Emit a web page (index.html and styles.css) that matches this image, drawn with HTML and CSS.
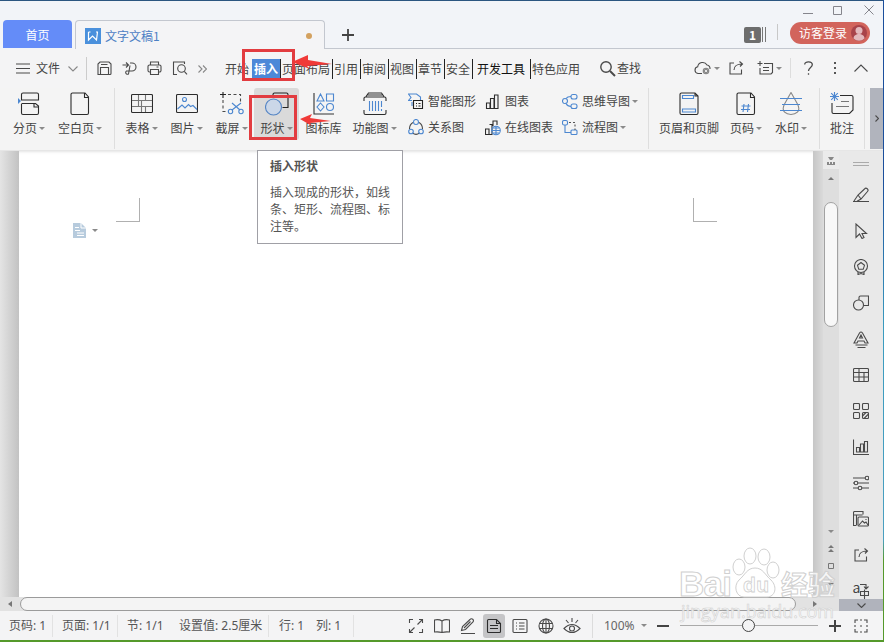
FILE: index.html
```
<!DOCTYPE html>
<html lang="zh-CN">
<head>
    <meta charset="UTF-8">
    <title>文字文稿1</title>
    <link rel="stylesheet" href="styles.css">
</head>
<body>
<div class="window">
    <header class="titlebar">
        <div class="home-tab">首页</div>
        <div class="doc-tab">
            <svg class="doc-logo" width="16" height="16" viewBox="0 0 16 16"><rect width="16" height="16" fill="#4a90dc"/><path d="M3.5 4v8l4-4 4 4 1-8M3.500 4h2M11 4h2" fill="none" stroke="#fff" stroke-width="1.2"/></svg>
            <span class="doc-name">文字文稿1</span>
            <span class="unsaved"></span>
        </div>
        <div class="title-rest">
            <svg class="new-tab" width="12" height="12" viewBox="0 0 12 12"><path d="M6 0v12M0 6h12" stroke="#444" stroke-width="1.8"/></svg>
            <span class="win-count">1</span>
            <span class="win-bars"></span>
            <span class="title-line"></span>
            <div class="title-right">
                <svg class="win-controls" width="80" height="12" viewBox="0 0 80 12"><path d="M3 9.500h10M33.500 2.500h8v8h-8zM64.500 1.500l9 9M73.500 1.500l-9 9" fill="none" stroke="#85858c"/></svg>
                <div class="login"><span>访客登录</span>
                    <svg width="16" height="16" viewBox="0 0 16 16"><circle cx="8" cy="8" r="8" fill="#a8434a"/><circle cx="8" cy="5.500" r="3.500" fill="#e3b9bd"/><path d="M2.500 13.500c0-6 11-6 11 0a8 8 0 0 1-11 0z" fill="#e3b9bd"/></svg>
                </div>
            </div>
        </div>
    </header>

    <nav class="menubar">
        <svg class="icon burger" width="14" height="11" viewBox="0 0 14 11"><path d="M0 1h14M0 5.500h14M0 10h14"/></svg>
        <span class="file">文件</span>
        <svg class="icon light" width="10" height="6" viewBox="0 0 10 6"><path d="M.5.5l4.500 4.500L9.500.5"/></svg>
        <span class="menu-line"></span>
        <div class="quick">
            <svg class="icon" width="15" height="15" viewBox="0 0 15 15"><path d="M1 13.500V3L3 1h9l2 2v9.500a1 1 0 0 1-1 1zM4 3.500h6.500M3.500 13.500v-7h8v7"/></svg>
            <svg class="icon" width="15" height="15" viewBox="0 0 15 15"><path d="M8 2h2a4 4 0 0 1 0 8H4.500a1.700 1.700 0 1 0 2 3L8 4.500M.5 4h6M4 1.500L6.500 4 4 6.500"/></svg>
            <svg class="icon" width="15" height="15" viewBox="0 0 15 15"><path d="M3.500 4V1h8v3M3.500 11h-1a1.500 1.500 0 0 1-1.500-1.500v-4A1.500 1.500 0 0 1 2.500 4h10A1.500 1.500 0 0 1 14 5.500v4a1.500 1.500 0 0 1-1.500 1.500h-1M3.500 8.500h8v5h-8zM9.500 6h2"/></svg>
            <svg class="icon" width="16" height="15" viewBox="0 0 16 15"><path d="M5 13.500H1.500V1h11v2"/><circle cx="9.500" cy="7.500" r="3.800"/><path d="M12.300 10.300l2.700 3"/></svg>
            <svg class="icon light" width="9" height="8" viewBox="0 0 9 8"><path d="M.5.5L4 4 .5 7.500M5 .5L8.500 4 5 7.500"/></svg>
        </div>
        <div class="tabs">
            <span class="tab plain">开始</span>
            <span class="tab active">插入</span>
            <span class="tab wide">页面布局</span>
            <span class="tab">引用</span>
            <span class="tab">审阅</span>
            <span class="tab">视图</span>
            <span class="tab">章节</span>
            <span class="tab">安全</span>
            <span class="tab dev">开发工具</span>
            <span class="tab plain special">特色应用</span>
        </div>
        <svg class="icon search-icon" width="16" height="16" viewBox="0 0 16 16"><circle cx="6" cy="6" r="5.200" stroke-width="1.400"/><path d="M10 10l5 5" stroke-width="2"/></svg>
        <span class="search">查找</span>
        <div class="menu-tools">
            <svg class="icon" width="18" height="14" viewBox="0 0 18 14"><path d="M8 12.500H4a3.400 3.400 0 0 1-.3-6.700A5 5 0 0 1 13 4a3.500 3.500 0 0 1 3 4"/><circle cx="12" cy="10" r="3.300" fill="#888" stroke="none"/><path d="M10.800 8.800l2.400 2.400M13.200 8.800l-2.400 2.400" stroke="#fff" stroke-width=".8"/></svg>
            <i class="caret c1"></i>
            <svg class="icon share" width="15" height="14" viewBox="0 0 15 14"><path d="M5 2H1v11h11.500V8.500M5 9c0-3.500 3-6 8-6M10.500.5L13.500 3 11 5.500"/></svg>
            <svg class="icon note" width="17" height="14" viewBox="0 0 17 14"><path d="M7 2.500h8.500v9L14 13H3V7M3 0v5M.5 2.500h5M6 6.500h6M6 9.500h6"/></svg>
            <i class="caret c1"></i>
            <span class="tool-line"></span>
            <svg class="icon help" width="9" height="14" viewBox="0 0 9 14"><path d="M.7 3.500C.7 0 8.300 0 8.300 3.800 8.300 6.500 4.500 6.500 4.500 10M4.500 12.300v1.400" stroke-width="1.300"/></svg>
            <svg class="dots" width="2" height="12" viewBox="0 0 2 12"><path d="M0 0h2v2H0zM0 5h2v2H0zM0 10h2v2H0z" fill="#555"/></svg>
            <svg class="icon" width="14" height="8" viewBox="0 0 14 8"><path d="M.5 7.500L7 1l6.500 6.500"/></svg>
        </div>
    </nav>

    <section class="ribbon">
        <div class="group first">
            <div class="btn w46">
                <svg class="icon dark" width="24" height="24" viewBox="0 0 24 24"><path d="M4.500 8V2.500a1.500 1.500 0 0 1 1.500-1.500h14a1.500 1.500 0 0 1 1.500 1.500V8h-17zM4.500 12v9a1.500 1.500 0 0 0 1.500 1.500h14a1.500 1.500 0 0 0 1.500-1.500v-7l-3-2.500H4.500M17 11v4h5"/><path d="M1 6v6l3-3z" fill="#4c87d0" stroke="none"/></svg>
                <span>分页<i class="caret"></i></span>
            </div>
            <div class="btn w56">
                <svg class="icon dark" width="20" height="24" viewBox="0 0 20 24"><path d="M1 2.500A1.500 1.500 0 0 1 2.500 1H15l3.500 4v16a1.500 1.500 0 0 1-1.500 1.500H2.500A1.500 1.500 0 0 1 1 21zM14.500 1v4.500H19"/></svg>
                <span>空白页<i class="caret"></i></span>
            </div>
        </div>
        <div class="group main">
            <div class="btn w45">
                <svg class="icon dark" width="22" height="24" viewBox="0 0 22 24"><rect x=".5" y="2.500" width="21" height="18" rx="1"/><path d="M1 8.500h20M1 14.500h20M7.500 3v11M14.500 3v5M14.500 14v6M10.500 9v11" stroke="#777"/></svg>
                <span>表格<i class="caret"></i></span>
            </div>
            <div class="btn w45">
                <svg class="icon dark" width="22" height="24" viewBox="0 0 22 24"><rect x=".5" y="2.500" width="21" height="18" rx="1"/><g class="blue"><circle cx="8.500" cy="7.500" r="2"/><path d="M1.500 17l4.500-4 3 3 3.500-3.500 2 2 2.500-1 4 4"/></g></svg>
                <span>图片<i class="caret"></i></span>
            </div>
            <div class="btn w45">
                <svg class="icon" width="24" height="24" viewBox="0 0 24 24"><path d="M3 0v6M0 2.500h6" stroke="#222"/><path d="M8 2.500h12.500V11M3 8v11.500h6" stroke-dasharray="3 2.500"/><g class="blue"><circle cx="10.500" cy="19.500" r="2.200"/><circle cx="21" cy="19.500" r="2.200"/><path d="M12 18l9-7M20 18l-8-7"/></g></svg>
                <span>截屏<i class="caret"></i></span>
            </div>
            <div class="btn w45 pressed">
                <svg class="icon" width="24" height="24" viewBox="0 0 24 24"><path d="M8 6V2.500A1.500 1.500 0 0 1 9.500 1h12A1.500 1.500 0 0 1 23 2.500v13H17.500" stroke="#222"/><circle cx="8.500" cy="15" r="8" fill="#cbd7e8" stroke="#5585c4"/></svg>
                <span>形状<i class="caret"></i></span>
            </div>
            <div class="btn w49">
                <svg class="icon blue" width="22" height="24" viewBox="0 0 22 24"><path d="M1 1v21h20" stroke="#333"/><path d="M4 9l3.500-7L11 9zM13.500 2h7v7h-7zM7.500 11l3.500 4-3.500 4L4 15z"/><circle cx="17" cy="15" r="3.500"/></svg>
                <span>图标库</span>
            </div>
            <div class="btn w53">
                <svg class="icon dark" width="24" height="24" viewBox="0 0 24 24"><path d="M1 9V6.500A1.500 1.500 0 0 1 2.500 5h19A1.500 1.500 0 0 1 23 6.500V9M1 18v3a1.500 1.500 0 0 0 1.500 1.500h19A1.500 1.500 0 0 0 23 21v-3M3 4.500l2.500-3.500h13l2.500 3.500M4 3h16"/><path class="blue" d="M6.500 9v10M9.500 9v10M12.500 9v10M15.500 9v10M18.500 9v6M18.500 17v2"/></svg>
                <span>功能图<i class="caret"></i></span>
            </div>
            <div class="stack s1">
                <div class="row">
                    <svg class="icon blue" width="16" height="17" viewBox="0 0 16 17"><path d="M4 7.500H.5L3 4.500.5 1h8l4 3v3M4 9v4"/><path d="M5.500 7.500h9v8h-9zM8 10.500h1M10.500 10.500h2M8 13h1M10.500 13h2" stroke="#222"/></svg>
                    <span>智能图形</span>
                </div>
                <div class="row">
                    <svg class="icon" width="16" height="17" viewBox="0 0 16 17"><path d="M5 3.500C2.500 5 1.500 7 1.500 10M11 3.500c2.500 1.500 3.500 4 3.500 6.500M4.500 14c2 1.500 5 1.500 7 0"/><g class="blue"><circle cx="8" cy="3" r="2.500"/><circle cx="3" cy="12.500" r="2.300"/><circle cx="13" cy="12.500" r="2.300"/></g></svg>
                    <span>关系图</span>
                </div>
            </div>
            <div class="stack s2">
                <div class="row">
                    <svg class="icon dark" width="16" height="17" viewBox="0 0 16 17"><path d="M1.500 10h3.500v5.500H1.500zM5.500 5.500H9v10H5.500zM9.500 2H13v13.500H9.500z"/></svg>
                    <span>图表</span>
                </div>
                <div class="row">
                    <svg class="icon dark" width="16" height="17" viewBox="0 0 16 17"><path d="M.5 10H4v5.500H.5zM4.500 5.500H7v10H4.500M8 7V2h4v4"/><g class="blue"><circle cx="11" cy="11.500" r="4.300"/><path d="M7 11.500h8M11 7v9M8 9h6M8 14h6"/></g></svg>
                    <span>在线图表</span>
                </div>
            </div>
            <div class="stack s3">
                <div class="row">
                    <svg class="icon blue" width="16" height="17" viewBox="0 0 16 17"><circle cx="3" cy="8" r="2.500"/><rect x="9" y="1.500" width="6" height="4.500" rx="2"/><rect x="9" y="11" width="6" height="4.500" rx="2"/><path d="M4 5.500C5 4 7 3.500 9 3.500M4 10.500c1 2 3 3 5 3"/></svg>
                    <span>思维导图<i class="caret"></i></span>
                </div>
                <div class="row">
                    <svg class="icon blue" width="16" height="17" viewBox="0 0 16 17"><rect x=".5" y="1.500" width="5" height="4.500" rx="1.500"/><rect x="9" y="11" width="6" height="4.500" rx="1"/><path d="M3 6v7.500h6"/><path d="M7 3.500h6V11" stroke="#555" stroke-dasharray="2 2"/></svg>
                    <span>流程图<i class="caret"></i></span>
                </div>
            </div>
        </div>
        <div class="group pages">
            <div class="btn w74">
                <svg class="icon dark" width="20" height="24" viewBox="0 0 20 24"><path d="M1 2.500A1.500 1.500 0 0 1 2.500 1H16l3 3v17a1.500 1.500 0 0 1-1.500 1.500h-15A1.500 1.500 0 0 1 1 21zM16 1v3h3"/><path class="blue" d="M3.500 3.500h11v3h-11zM3.500 17h13v3h-13z"/></svg>
                <span>页眉和页脚</span>
            </div>
            <div class="btn w40">
                <svg class="icon dark" width="20" height="24" viewBox="0 0 20 24"><path d="M1 2.500A1.500 1.500 0 0 1 2.500 1H15l3.500 4v16a1.500 1.500 0 0 1-1.500 1.500H2.500A1.500 1.500 0 0 1 1 21zM14.500 1v4.500H19"/><path class="blue" d="M8 12l-1 8M12.500 12l-1 8M5.500 14h9M5 17.500h9"/></svg>
                <span>页码<i class="caret"></i></span>
            </div>
            <div class="btn w50">
                <svg class="icon" width="24" height="24" viewBox="0 0 24 24"><path d="M12 .5L5.800 11.500C1 20 8 22.500 12 22.500s11-2.500 6.200-11z" stroke="#888"/><path class="blue" d="M1 6.500h22M3 12.500h18M1 18.500h22"/></svg>
                <span>水印<i class="caret"></i></span>
            </div>
        </div>
        <div class="group comment">
            <div class="btn w44">
                <svg class="icon dark" width="24" height="24" viewBox="0 0 24 24"><path d="M10 3.500h11.500A1.500 1.500 0 0 1 23 5v13l-3.500 3.500h-16A1.500 1.500 0 0 1 2 20v-9"/><path d="M11 9.500h8M6 14.500h13" stroke="#777"/><path class="blue" d="M4.500 0v9M0 4.500h9M1.200 1.200l6.600 6.600M7.800 1.200L1.200 7.800"/></svg>
                <span>批注</span>
            </div>
        </div>
        <div class="ribbon-more"><svg class="icon" width="4" height="7" viewBox="0 0 4 7"><path d="M.5.5l3 3-3 3"/></svg></div>
    </section>

    <main class="work">
        <div class="editor">
            <div class="canvas">
                <div class="gutter"></div>
                <div class="page">
                    <div class="corners"><span class="corner left"></span><span class="corner right"></span></div>
                    <div class="paste">
                        <svg width="13" height="15" viewBox="0 0 13 15"><path d="M0 0h8l5 5v10H0z" fill="#b7cbdd"/><path d="M8 0v5h5M2 4.500h4M2 7.500h5M4 10h7M4 12.500h7" fill="none" stroke="#fff"/></svg>
                        <i class="caret"></i>
                    </div>
                </div>
                <div class="gutter right"></div>
                <div class="vscroll">
                    <div class="ruler-btn"><svg width="8" height="9" viewBox="0 0 8 9"><path d="M1 0h6L5 3H3zM0 5h8v3H0z" fill="#888"/><path d="M2.500 4v3M5.500 4v3" stroke="#eee"/></svg></div>
                    <i class="up"></i>
                    <div class="vthumb"></div>
                    <i class="caret down"></i>
                    <svg class="pager" width="8" height="46" viewBox="0 0 8 46"><path d="M1 4l3-3 3 3zM1 8l3-3 3 3zM1 39l3 3 3-3zM1 35l3 3 3-3z" fill="#777"/><path d="M1.500 19.500h5v5h-5z" fill="none" stroke="#777"/></svg>
                </div>
            </div>
            <div class="hscroll">
                <svg width="4" height="6" viewBox="0 0 4 6"><path d="M4 0v6L0 3z" fill="#777"/></svg>
                <div class="hthumb"></div>
                <svg class="to-right" width="4" height="6" viewBox="0 0 4 6"><path d="M0 0v6l4-3z" fill="#777"/></svg>
            </div>
        </div>
        <aside class="side">
            <div class="side-icons">
                <div class="grip"></div>
                <div class="cell"><svg class="icon" width="16" height="16" viewBox="0 0 16 16"><path d="M0 14.500h16M1 14L5 8l6.500-6a1.800 1.800 0 0 1 3 2.500L8 12l-4 2.300M5 8l3 4"/></svg></div>
                <div class="cell"><svg class="icon" width="16" height="16" viewBox="0 0 16 16"><path d="M3 1v13.500L6.500 11 9 15.500l2-1L9 10.500h4.500z"/></svg></div>
                <div class="cell"><svg class="icon" width="16" height="16" viewBox="0 0 16 16"><circle cx="8" cy="7" r="6.500"/><path d="M8 3.500l3.500 2.800-1.300 4H5.800l-1.300-4zM5 13v2.500l3-1 3 1V13"/></svg></div>
                <div class="cell"><svg class="icon" width="16" height="16" viewBox="0 0 16 16"><circle cx="5.500" cy="10" r="5"/><path d="M6 5V2.500A1.500 1.500 0 0 1 7.500 1h8v9.500H10.500"/></svg></div>
                <div class="cell"><svg class="icon" width="16" height="17" viewBox="0 0 16 17"><path d="M1 12L6.500 2Q8 0 9.500 2L15 12h-3l-1-2H5l-1 2zM6.500 7L8 4l1.500 3zM2.500 14h12M4.500 16.500h8"/></svg></div>
                <div class="cell"><svg class="icon" width="16" height="16" viewBox="0 0 16 16"><rect x=".5" y="1.500" width="15" height="13" rx="1"/><path d="M1 5.500h14M1 10h14M6 1.500v13M11 5.500v9"/></svg></div>
                <div class="cell"><svg class="icon" width="16" height="16" viewBox="0 0 16 16"><rect x=".5" y=".5" width="6" height="6" rx="1"/><rect x="9.500" y=".5" width="6" height="6" rx="1"/><rect x=".5" y="9.500" width="6" height="6" rx="1"/><rect x="9.500" y="9.500" width="6" height="6" rx="1"/><path d="M9.500 13l3.500-3.500M11 15.500l4.500-4.500"/></svg></div>
                <div class="cell"><svg class="icon" width="16" height="16" viewBox="0 0 16 16"><path d="M.5.5v15H16M3.500 13V8.500h3V13zM7.500 13V5h3v8zM11.500 13V2.500h3V13z"/></svg></div>
                <div class="cell"><svg class="icon" width="16" height="16" viewBox="0 0 16 16"><path d="M0 3h12M0 8h1M5 8h11M0 13h5M9 13h7"/><circle cx="14" cy="3" r="1.800"/><circle cx="3" cy="8" r="1.800"/><circle cx="7" cy="13" r="1.800"/></svg></div>
                <div class="cell"><svg class="icon" width="16" height="16" viewBox="0 0 16 16"><path d="M3 14.500H.5V1.500A1 1 0 0 1 1.500.5H10v3M.5 4h9M3.500 14.500V4"/><rect x="5" y="6" width="10.500" height="9" rx="1"/><path d="M6 14l3.500-4 2 2 1.500-1 2 3M13 8v1"/></svg></div>
                <div class="cell"><svg class="icon" width="15" height="14" viewBox="0 0 15 14"><path d="M5 2H1v11h11.500V8.500M5 9c0-3.500 3-6 8-6M10.500.5L13.500 3 11 5.500"/></svg></div>
                <div class="cell translate"><span>a</span><svg class="icon" width="9" height="17" viewBox="0 0 9 17"><path d="M0 1.500h6V5M4 3.500L6 6l2.500-2.500M.5 8.500h8v4h-8zM4.500 6.500v10"/></svg></div>
            </div>
            <div class="side-more"><svg class="icon" width="9" height="5" viewBox="0 0 9 5"><path d="M.5.5l4 4 4-4"/></svg></div>
        </aside>
    </main>

    <footer class="status">
        <span class="st a">页码: 1</span>
        <span class="st b">页面: 1/1</span>
        <span class="st c">节: 1/1</span>
        <span class="st d">设置值: 2.5厘米</span>
        <span class="st e">行: 1</span>
        <span class="st f">列: 1</span>
        <div class="views">
            <span class="view"><svg class="icon" width="16" height="16" viewBox="0 0 16 16"><path d="M1.500 5V1.500H5M11 1.500h3.500V5M14.500 11v3.500H11M5 14.500H1.500V11M9.500 6.500l5-5M6.500 9.500l-5 5"/></svg></span>
            <span class="view"><svg class="icon" width="16" height="16" viewBox="0 0 16 16"><path d="M8 3Q5 1 .5 2v12q4-.5 7.500.5 3.500-1 7.500-.5V2Q11 1 8 3zM8 3v11"/></svg></span>
            <span class="view"><svg class="icon" width="16" height="16" viewBox="0 0 16 16"><path d="M1 15.500h14M1.500 12.500l1-4L10 1.500a1.900 1.900 0 0 1 3 2.500L5.500 11.500zM4 10l6.500-6.500"/></svg></span>
            <span class="view on"><svg class="icon dark" width="16" height="16" viewBox="0 0 16 16"><path d="M1.500 2.500a1 1 0 0 1 1-1h8l4 4v8a1 1 0 0 1-1 1h-11a1 1 0 0 1-1-1zM10.500 1.500v4h4M4 7.500h8M4 10.500h8"/></svg></span>
            <span class="view"><svg class="icon" width="16" height="16" viewBox="0 0 16 16"><rect x="1" y="1.500" width="14" height="13" rx="1"/><path d="M4 5h1M4 8h1M4 11h1M7 5h5.500M7 8h5.500M7 11h5.500"/></svg></span>
            <span class="view"><svg class="icon" width="16" height="16" viewBox="0 0 16 16"><circle cx="8" cy="8" r="7"/><ellipse cx="8" cy="8" rx="3.500" ry="7"/><path d="M8 1v14M1.500 5.500h13M1.500 10.500h13"/></svg></span>
            <span class="view"><svg class="icon" width="18" height="16" viewBox="0 0 18 16"><path d="M1 10.500q8-8 16 0-8 8-16 0zM3 2l2.500 3M9 0v4M15 2l-2.500 3"/><circle cx="9" cy="10.500" r="2.500"/></svg></span>
        </div>
        <span class="zoom-text">100%</span>
        <i class="caret"></i>
        <svg class="minus" width="12" height="2"><path d="M0 1h12" stroke="#444" stroke-width="2"/></svg>
        <div class="slider"><span class="knob"></span></div>
        <svg class="plus" width="12" height="12" viewBox="0 0 12 12"><path d="M6 0v12M0 6h12" stroke="#444" stroke-width="2"/></svg>
        <svg class="icon" width="14" height="14" viewBox="0 0 14 14"><path d="M1 4V1h3M10 1h3v3M13 10v3h-3M4 13H1v-3M6 1h2M6 13h2M1 6v2M13 6v2M6 7h2"/></svg>
    </footer>
</div>

<div class="tooltip">
    <b>插入形状</b>
    <p>插入现成的形状，如线条、矩形、流程图、标注等。</p>
</div>

<div class="mark mark-tab"></div>
<div class="mark mark-shape"></div>
<svg class="arrows" width="48" height="76" viewBox="0 0 48 76"><path d="M2 9L18 2v5l24 4-25 2 3 3zM10 66l12-5-2 4 21 3-21 2 2 3z" fill="#f03a38"/></svg>

<svg class="watermark" width="164" height="80" viewBox="0 0 164 80">
    <g class="wm-shape">
        <ellipse cx="62" cy="22" rx="6" ry="8"/>
        <ellipse cx="73" cy="11" rx="6" ry="8"/>
        <ellipse cx="87" cy="12" rx="6" ry="8"/>
        <ellipse cx="96" cy="25" rx="6" ry="8"/>
        <path d="M78 23c-8 0-10 7-16 12-6 6-3 17 5 17h23c8 0 11-10 4-17-6-5-8-12-16-12z"/>
        <text class="wm-big" x="2" y="51" textLength="53">Bai</text>
        <text class="wm-du" x="66" y="47" textLength="26">du</text>
        <text class="wm-cn" x="104" y="50" textLength="54">经验</text>
        <text class="wm-url" x="4" y="73" textLength="153">jingyan.baidu.com</text>
    </g>
</svg>
</body>
</html>
```
FILE: styles.css
```
* {
    box-sizing: border-box;
}
body {
    margin: 0;
    width: 884px;
    height: 642px;
    overflow: hidden;
    position: relative;
    font-family: "Noto Sans CJK SC", sans-serif;
    font-size: 12px;
    line-height: 18px;
    color: #444;
    background: linear-gradient(#1b4f9c 0, #1b4f9c 180px, #3a9cc0 330px, #4a9fc0 540px, #55992b 560px);
}
svg {
    display: block;
    flex: none;
}
.window {
    width: 883px;
    height: 640px;
    padding-top: 1px;
    background: #2b5580;
}
.icon {
    fill: none;
    stroke: #4a4a4a;
    stroke-width: 1.1;
}
.icon.light {
    stroke: #888;
}
.icon.dark {
    stroke: #2c2c2c;
}
.icon.blue, .blue {
    stroke: #4c87d0;
}
.caret {
    flex: none;
    border: 3px solid transparent;
    border-top-color: #8a8a8a;
    border-bottom: 0;
    width: 6px;
    height: 3px;
}

/* title bar */
.titlebar {
    height: 48px;
    display: flex;
    align-items: flex-end;
    background: #f2f4f8;
}
.home-tab {
    width: 69px;
    height: 28px;
    margin: 0 3px 1px;
    border-radius: 4px 4px 0 0;
    background: #648cf8;
    color: #fff;
    text-align: center;
    line-height: 29px;
}
.doc-tab {
    width: 250px;
    height: 29px;
    display: flex;
    align-items: center;
    padding: 2px 12px 0 9px;
    border: 1px solid #c3c7cf;
    border-bottom: 0;
    border-radius: 4px 4px 0 0;
    background: #f4f4f6;
}
.doc-name {
    flex: 1;
    margin-left: 4px;
    color: #4d80c4;
}
.unsaved {
    width: 6px;
    height: 6px;
    border-radius: 3px;
    background: #d3a15f;
}
.title-rest {
    flex: 1;
    height: 48px;
    display: flex;
    align-items: center;
    border-bottom: 1px solid #c3c7cf;
    padding-top: 20px;
}
.new-tab {
    margin-left: 17px;
}
.win-count {
    margin-left: 390px;
    width: 17px;
    height: 16px;
    border-radius: 2px;
    background: #6d6d6d;
    color: #fff;
    font-weight: bold;
    text-align: center;
    line-height: 16px;
}
.win-bars {
    width: 4px;
    height: 15px;
    border: 1px solid #777;
    border-width: 0 1px;
    margin-left: 1px;
}
.title-line {
    width: 1px;
    height: 16px;
    background: #c8c8c8;
    margin: -6px 12px 0 11px;
}
.title-right {
    height: 48px;
    margin-top: -20px;
    padding-top: 3px;
}
.win-controls {
    margin: 0 0 6px 10px;
}
.login {
    width: 80px;
    height: 22px;
    border-radius: 11px;
    background: #d2645c;
    color: #fff;
    display: flex;
    align-items: center;
    padding-left: 9px;
    gap: 4px;
}

/* menu bar */
.menubar {
    height: 39px;
    display: flex;
    align-items: center;
    background: #f4f4f5;
    white-space: nowrap;
}
.burger {
    margin-left: 16px;
}
.file {
    width: 24px;
    margin: -1px 8px 0 6px;
}
.menu-line {
    width: 1px;
    height: 23px;
    background: #ccc;
    margin: 0 10px 0 8px;
}
.quick {
    display: flex;
    align-items: center;
    gap: 10px;
    width: 127px;
}
.tabs {
    display: flex;
    height: 20px;
    width: 376px;
}
.tab {
    width: 28px;
    border-right: 1px solid #222;
    padding-left: 1px;
    line-height: 20px;
}
.tab.plain {
    border: 0;
}
.tab.active {
    width: 29px;
    padding-left: 2px;
    background: #4c88d8;
    color: #fff;
    font-weight: bold;
}
.tab.wide {
    width: 52px;
}
.tab.dev {
    width: 58px;
    padding-left: 4px;
    color: #111;
}
.tab.special {
    width: 52px;
}
.search {
    margin: -2px 0 0 1px;
    width: 24px;
}
.menu-tools {
    display: flex;
    align-items: center;
    margin: -1px 0 0 53px;
}
.c1 {
    margin-left: 2px;
}
.share {
    margin: 0 13px 0 9px;
}
.tool-line {
    width: 1px;
    height: 20px;
    background: #ddd;
    margin: 0 13px 0 8px;
}
.dots {
    margin: 0 18px 0 21px;
}

/* ribbon */
.ribbon {
    height: 63px;
    display: flex;
    background: #f4f4f4;
    border-bottom: 1px solid #e6e6e6;
}
.group {
    display: flex;
    height: 61px;
    border-right: 1px solid #dedede;
}
.first {
    width: 115px;
    padding-left: 6px;
}
.main {
    width: 534px;
    padding-left: 4px;
}
.pages {
    width: 171px;
    padding-left: 3px;
}
.comment {
    width: 45px;
}
.btn {
    display: flex;
    flex-direction: column;
    align-items: center;
    flex: none;
    padding-top: 4px;
}
.btn span {
    display: flex;
    align-items: center;
    margin-top: 3px;
    white-space: nowrap;
}
.btn .caret, .row .caret {
    margin-left: 2px;
}
.pressed {
    height: 52px;
    border-radius: 3px;
    background: #dadada;
}
.w40 { width: 40px; }
.w44 { width: 44px; }
.w45 { width: 45px; }
.w46 { width: 46px; }
.w49 { width: 49px; }
.w50 { width: 50px; }
.w53 { width: 53px; }
.w56 { width: 56px; }
.w74 { width: 74px; }
.stack {
    padding-top: 4px;
    display: flex;
    flex-direction: column;
    gap: 8px;
    flex: none;
}
.s1 {
    width: 77px;
    margin-left: 7px;
}
.s2 {
    width: 77px;
}
.row {
    display: flex;
    align-items: center;
    gap: 4px;
    height: 18px;
    white-space: nowrap;
}
.row span {
    display: flex;
    align-items: center;
}
.ribbon-more {
    width: 13px;
    height: 61px;
    margin-left: auto;
    background: #b1b4bd;
    display: flex;
    align-items: center;
    justify-content: center;
}

/* work area */
.work {
    display: flex;
    height: 460px;
}
.editor {
    width: 839px;
    background: #e2e2e2;
}
.canvas {
    height: 446px;
    display: flex;
}
.gutter {
    width: 19px;
    background: linear-gradient(90deg, #e4e4e4, #c2c2c2);
}
.gutter.right {
    width: 10px;
    background: linear-gradient(90deg, #c6c6c6, #dadada);
}
.page {
    width: 794px;
    background: #fff;
    box-shadow: inset 0 3px 3px -2px #e4e4e4;
    padding: 47px 96px 0 97px;
}
.corners {
    display: flex;
    justify-content: space-between;
}
.corner {
    width: 24px;
    height: 24px;
    border-bottom: 1px solid #b0b0b0;
}
.corner.left {
    border-right: 1px solid #b0b0b0;
}
.corner.right {
    border-left: 1px solid #b0b0b0;
}
.paste {
    display: flex;
    align-items: center;
    gap: 6px;
    margin: 1px 0 0 -43px;
}
.vscroll {
    width: 16px;
    display: flex;
    flex-direction: column;
    align-items: center;
    background: #dedede;
}
.ruler-btn {
    width: 16px;
    height: 18px;
    padding: 6px 0 0 4px;
    background: #ebebeb;
}
.up {
    border: 3px solid transparent;
    border-top: 0;
    border-bottom-color: #777;
    margin: 8px 0 22px;
}
.vthumb {
    width: 14px;
    height: 125px;
    border: 1px solid #a2a2a2;
    border-radius: 7px;
    background: #f8f8f8;
}
.down {
    margin-top: 203px;
}
.pager {
    margin-top: 11px;
}
.hscroll {
    height: 14px;
    display: flex;
    align-items: center;
    padding-left: 8px;
}
.hthumb {
    width: 776px;
    height: 14px;
    margin-left: 8px;
    border: 1px solid #9b9b9b;
    border-radius: 7px;
    background: #f4f4f4;
}
.to-right {
    margin-left: 17px;
}
.side {
    width: 44px;
    background: #e9e9e9;
}
.side-icons {
    height: 448px;
    overflow: hidden;
}
.grip {
    width: 16px;
    height: 4px;
    border: 1px solid #aaa;
    border-width: 1px 0;
    margin: 11px 0 11px 14px;
}
.cell {
    height: 36px;
    display: flex;
    align-items: center;
    justify-content: center;
}
.translate span {
    font-size: 14px;
    line-height: 12px;
    margin-top: -8px;
}
.side-more {
    height: 12px;
    background: #b0b3bc;
    display: flex;
    align-items: center;
    justify-content: center;
}

/* status bar */
.status {
    height: 29px;
    display: flex;
    align-items: center;
    background: #f4f4f5;
    white-space: nowrap;
    font-family: "Noto Sans", "Noto Sans CJK SC", sans-serif;
}
.st {
    height: 22px;
    line-height: 22px;
    padding-left: 9px;
    border-right: 1px solid #e2e2e2;
    color: #555;
}
.a { width: 53px; }
.b { width: 65px; }
.c {
    width: 52px;
    border: 0;
}
.d { width: 99px; }
.e {
    width: 38px;
    border: 0;
    padding-left: 10px;
}
.f { width: 47px; }
.views {
    display: flex;
    width: 189px;
    height: 24px;
    margin-left: 50px;
    padding-left: 1px;
    gap: 4px;
    border-right: 1px solid #dcdcdc;
}
.view {
    width: 22px;
    height: 24px;
    display: flex;
    align-items: center;
    justify-content: center;
}
.view.on {
    border-radius: 3px;
    background: #c5c5c7;
}
.zoom-text {
    width: 37px;
    margin-left: 11px;
    color: #666;
}
.minus {
    margin: 0 11px 0 10px;
}
.slider {
    width: 138px;
    height: 13px;
    padding-left: 62px;
    background: linear-gradient(#aaa, #aaa) 0 6px / 138px 1px no-repeat;
}
.knob {
    display: block;
    width: 13px;
    height: 13px;
    border: 1px solid #444;
    border-radius: 50%;
    background: #f4f4f5;
}
.plus {
    margin: 0 13px 0 11px;
}

/* floating parts */
.tooltip {
    position: absolute;
    left: 257px;
    top: 150px;
    width: 146px;
    height: 94px;
    padding: 6px 11px 0 12px;
    border: 1px solid #a0a0a6;
    background: #fff;
    color: #555;
}
.tooltip p {
    margin: 8px 0 0;
    line-height: 17px;
}
.mark {
    position: absolute;
    border: 3px solid #e23c40;
}
.mark-tab {
    left: 242px;
    top: 49px;
    width: 53px;
    height: 32px;
}
.mark-shape {
    left: 249px;
    top: 95px;
    width: 48px;
    height: 45px;
}
.arrows {
    position: absolute;
    left: 290px;
    top: 53px;
}
.watermark {
    position: absolute;
    left: 677px;
    top: 545px;
}
.wm-shape {
    fill: #fff;
    fill-opacity: .75;
    stroke: #d0d0d0;
}
.wm-big {
    font: bold 35px "Liberation Sans", sans-serif;
}
.wm-du {
    font: bold 21px "Liberation Sans", sans-serif;
    stroke-width: .8;
}
.wm-cn {
    font: bold 27px "Noto Sans CJK SC", sans-serif;
}
.wm-url {
    font: 18px "Open Sans", sans-serif;
    stroke-width: .6;
}
```
